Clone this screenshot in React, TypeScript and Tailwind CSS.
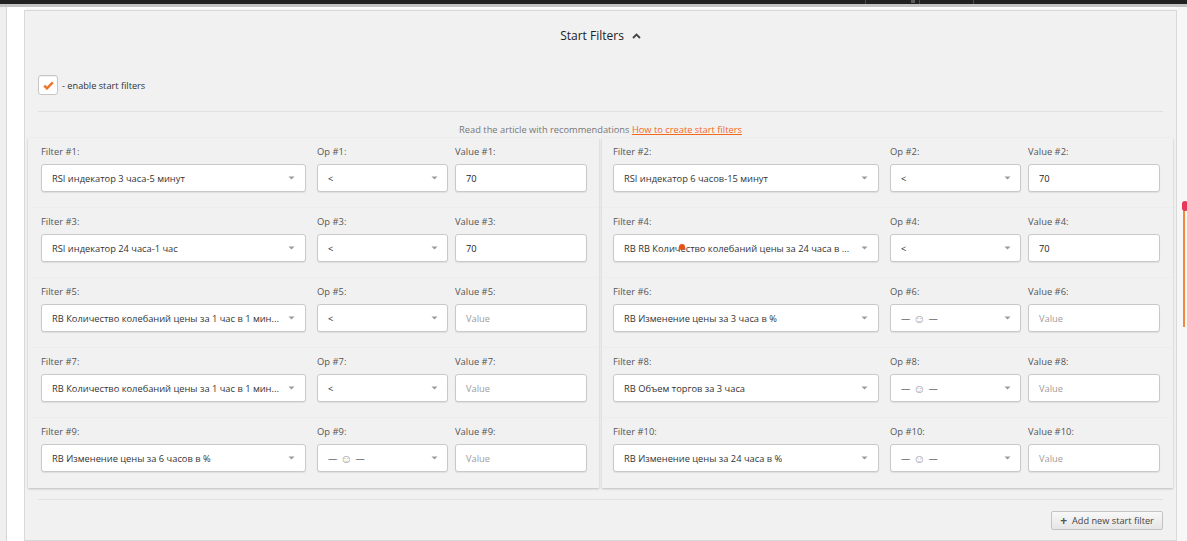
import React from "react";

type Row = { filter: string; op: string; value: string };

const rows: Row[] = [
  { filter: "RSI индекатор 3 часа-5 минут", op: "<", value: "70" },
  { filter: "RSI индекатор 6 часов-15 минут", op: "<", value: "70" },
  { filter: "RSI индекатор 24 часа-1 час", op: "<", value: "70" },
  { filter: "RB RB Количество колебаний цены за 24 часа в ...", op: "<", value: "70" },
  { filter: "RB Количество колебаний цены за 1 час в 1 мин...", op: "<", value: "" },
  { filter: "RB Изменение цены за 3 часа в %", op: "", value: "" },
  { filter: "RB Количество колебаний цены за 1 час в 1 мин...", op: "<", value: "" },
  { filter: "RB Объем торгов за 3 часа", op: "", value: "" },
  { filter: "RB Изменение цены за 6 часов в %", op: "", value: "" },
  { filter: "RB Изменение цены за 24 часа в %", op: "", value: "" },
];

function Caret() {
  return (
    <svg width="7" height="4" viewBox="0 0 7 4" className="shrink-0">
      <path d="M0.5 0.5h6L3.5 3.5z" fill="#9a9a9a" />
    </svg>
  );
}

function Box({ children, className = "" }: { children: React.ReactNode; className?: string }) {
  return (
    <div
      className={
        "h-[28px] flex items-center bg-white border border-[#c9c9c9] rounded-[3px] shadow-[0_1px_1px_rgba(0,0,0,0.08)] " +
        className
      }
    >
      {children}
    </div>
  );
}

function Empty() {
  return (
    <span className="flex items-center gap-[3px] text-[#222]">
      <span>—</span>
      <span className="text-[#9a9a9a] text-[12px] leading-none">☺</span>
      <span>—</span>
    </span>
  );
}

function Cell({ n, row, right }: { n: number; row: Row; right: boolean }) {
  return (
    <div
      className={
        "relative h-[70px] bg-[#f1f1f1] shadow-[0_1px_2px_rgba(0,0,0,0.22)] pt-[7px] flex " +
        (right ? "pl-[11px] pr-[13px]" : "pl-[13px] pr-[12px]")
      }
    >
      <div className="flex-1 min-w-0">
        <div className="text-[9.4px] leading-[14px] text-[#555] mb-[5px]">Filter #{n}:</div>
        <Box className="pl-[10px] pr-[10px] justify-between">
          <span className="truncate text-[9.3px] text-[#333] pt-px">{row.filter}</span>
          <Caret />
        </Box>
      </div>
      <div className="w-[131px] ml-[11px]">
        <div className="text-[9.4px] leading-[14px] text-[#555] mb-[5px]">Op #{n}:</div>
        <Box className="pl-[10px] pr-[9px] justify-between">
          <span className="text-[9.3px] text-[#222] pt-px">{row.op ? row.op : <Empty />}</span>
          <Caret />
        </Box>
      </div>
      <div className="w-[132px] ml-[7px]">
        <div className="text-[9.4px] leading-[14px] text-[#555] mb-[5px]">Value #{n}:</div>
        <Box className="pl-[10px]">
          {row.value ? (
            <span className="text-[9.3px] text-[#222] pt-px">{row.value}</span>
          ) : (
            <span className="text-[9.3px] text-[#9d9d9d] pt-px">Value</span>
          )}
        </Box>
      </div>
      {n === 4 && (
        <span className="absolute left-[77px] top-[36px] w-[6px] h-[6px] rounded-full bg-[#e8501a]" />
      )}
    </div>
  );
}

export default function App() {
  return (
    <div
      className="w-[1187px] h-[541px] overflow-hidden bg-white flex flex-col"
      style={{ fontFamily: '"Open Sans", "Noto Sans", sans-serif' }}
    >
      {/* top strip */}
      <div className="relative h-[4px] bg-[#212121] shrink-0">
        <span className="absolute left-[865px] top-0 h-[4px] w-px bg-[#4a4a4a]" />
        <span className="absolute left-[911px] top-0 h-[3px] w-[4px] bg-[#5a5a5a]" />
        <span className="absolute left-[919px] top-0 h-[4px] w-px bg-[#4a4a4a]" />
        <span className="absolute left-[973px] top-0 h-[4px] w-px bg-[#4a4a4a]" />
      </div>
      <div className="h-[3px] bg-[#c3c3c3] shrink-0" />

      <div className="flex flex-1 min-h-0">
        <div className="w-[7px] bg-[#efefef] border-r border-[#d6d6d6] shrink-0" />
        <div className="w-[17px] shrink-0" />

        <div className="w-[1153px] shrink-0 mt-[3px] border border-[#d9d9d9] bg-[#f1f1f1] shadow-[2px_0_3px_rgba(0,0,0,0.12)]">
          <div className="h-[49px] pt-[1px] flex items-center justify-center gap-[8px] text-[12px] text-[#222]">
            <span>Start Filters</span>
            <svg width="9" height="6" viewBox="0 0 9 6">
              <path d="M1 5l3.5-3.5L8 5" stroke="#444" strokeWidth="1.8" fill="none" />
            </svg>
          </div>

          <div className="mt-[15px] ml-[13px] flex items-center gap-[4px]">
            <div className="w-[20px] h-[20px] bg-white border border-[#c6c6c6] rounded-[3px] flex items-center justify-center shadow-[inset_0_1px_1px_rgba(0,0,0,0.06)]">
              <svg width="11" height="9" viewBox="0 0 11 9">
                <path d="M1.2 4.6l2.8 2.8L9.8 1.4" stroke="#f07428" strokeWidth="2.4" fill="none" />
              </svg>
            </div>
            <span className="text-[9.2px] text-[#333] pt-[2px]">- enable start filters</span>
          </div>

          <div className="mt-[16px] mx-[13px] h-px bg-[#e0e0e0]" />

          <div className="mt-[11px] text-center text-[9.3px] leading-[14px] text-[#777]">
            Read the article with recommendations{" "}
            <span className="text-[#f3691e] underline">How to create start filters</span>
          </div>

          <div className="mt-[1px] mx-[3px] grid grid-cols-2 gap-x-[3px]">
            {rows.map((r, i) => (
              <Cell key={i} n={i + 1} row={r} right={i % 2 === 1} />
            ))}
          </div>

          <div className="mt-[11px] mx-[13px] h-px bg-[#e0e0e0]" />

          <div className="mt-[11px] mr-[13px] flex justify-end">
            <button className="h-[19px] w-[112px] flex items-center justify-center gap-[5px] border border-[#c4c4c4] rounded-[2px] bg-gradient-to-b from-[#f8f8f8] to-[#e6e6e6] text-[9.2px] text-[#444]">
              <span className="text-[12px] leading-none font-bold text-[#555]">+</span>
              <span>Add new start filter</span>
            </button>
          </div>
        </div>

        <div className="relative flex-1 bg-[#f7f7f7]">
          <span className="absolute left-[6px] top-[195px] w-[8px] h-[125px] border-l-2 border-[#f28a3c] rounded-tl-[6px]" />
          <span className="absolute left-[5px] top-[194px] w-[6px] h-[10px] rounded-full bg-[#e8385a]" />
        </div>
      </div>
    </div>
  );
}
